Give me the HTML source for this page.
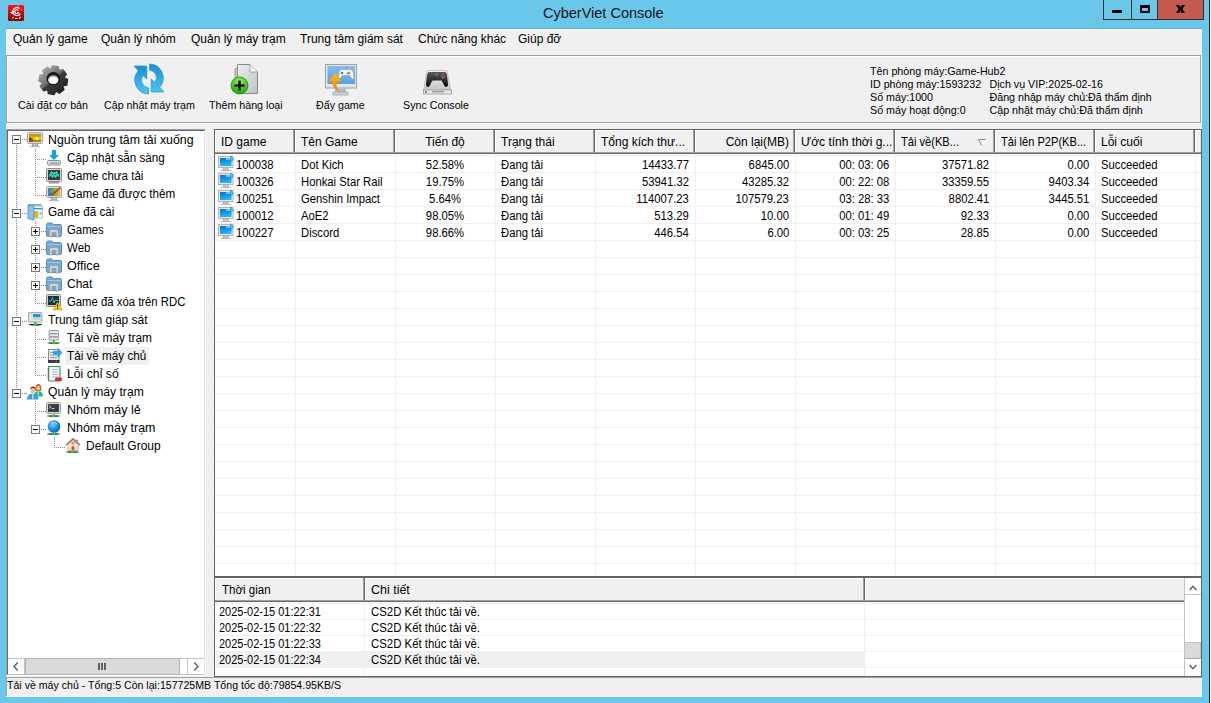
<!DOCTYPE html>
<html><head><meta charset="utf-8">
<style>
*{margin:0;padding:0;box-sizing:border-box}
html,body{width:1211px;height:703px;overflow:hidden}
body{position:relative;background:#69c8ea;font-family:"Liberation Sans",sans-serif;color:#000;font-size:12px}
.a{position:absolute}
.t{position:absolute;white-space:nowrap;line-height:1}
svg{position:absolute;overflow:visible}
.dv{position:absolute;width:1px;background:repeating-linear-gradient(to bottom,#888 0 1px,transparent 1px 2px)}
.dh{position:absolute;height:1px;background:repeating-linear-gradient(to right,#888 0 1px,transparent 1px 2px)}
</style></head><body>
<svg style="left:8px;top:5px" width="16" height="16" viewBox="0 0 16 16"><defs><linearGradient id="gapp" x1="0" y1="0" x2="0" y2="1"><stop offset="0" stop-color="#ff1414"/><stop offset="1" stop-color="#8a0000"/></linearGradient></defs><rect x="0" y="0" width="16" height="16" rx="1.5" fill="url(#gapp)"/><path d="M11.6 3.6 A4 4 0 1 0 12.3 8.6" fill="none" stroke="#fff" stroke-width="1.3"/><path d="M10.3 5.6 A1.9 1.9 0 1 0 10.3 7.6 H9" fill="none" stroke="#fff" stroke-width="1.1"/><path d="M9.5 1.5 L10.5 0.8 M12.8 4.8 L14 4.4" stroke="#fff" stroke-width="0.9"/><path d="M2 7.5 L4.8 6 L4.8 9.2Z" fill="#fff"/><path d="M5 13.5 V12 M7 13.5 H9.5 M11 13.5 L12.5 11.8" stroke="#fff" stroke-width="1.2"/></svg>
<div class="t" style="left:543px;top:6.33px;font-size:14.5px;color:#101020">CyberViet Console</div>
<div class="a" style="left:1103px;top:0px;width:29px;height:20px;border-left:1px solid #2b2b2b;border-bottom:1px solid #2b2b2b"></div>
<div class="a" style="left:1131px;top:0px;width:27px;height:20px;border-left:1px solid #2b2b2b;border-bottom:1px solid #2b2b2b"></div>
<div class="a" style="left:1157px;top:0px;width:47px;height:20px;background:#c45a50;border:1px solid #3a2a2a;border-top:none"></div>
<div class="a" style="left:1112px;top:10px;width:10px;height:3px;background:#000"></div>
<div class="a" style="left:1140px;top:5px;width:10px;height:8px;border:2px solid #000;border-top-width:3px"></div>
<svg style="left:1176px;top:5px" width="9" height="8"><path d="M0 0 H3.2 L4.5 2.2 L5.8 0 H9 L6.4 4 L9 8 H5.8 L4.5 5.8 L3.2 8 H0 L2.6 4Z" fill="#000"/></svg>
<div class="a" style="left:1209px;top:0px;width:1px;height:703px;background:#2b2b2b"></div>
<div class="a" style="left:1210px;top:0px;width:1px;height:703px;background:#fff"></div>
<div class="a" style="left:5px;top:28px;width:1197px;height:1px;background:#62aed2"></div>
<div class="a" style="left:6px;top:29px;width:1196px;height:668px;background:#f0f0f0"></div>
<div class="a" style="left:6px;top:29px;width:1196px;height:1px;background:#f8f4f4"></div>
<div class="a" style="left:6px;top:29px;width:1px;height:26px;background:#f8f4f4"></div>
<div class="t" style="left:13px;top:33.14px;font-size:12px;">Quản lý game</div>
<div class="t" style="left:101px;top:33.14px;font-size:12px;">Quản lý nhóm</div>
<div class="t" style="left:191px;top:33.14px;font-size:12px;">Quản lý máy trạm</div>
<div class="t" style="left:300px;top:33.14px;font-size:12px;">Trung tâm giám sát</div>
<div class="t" style="left:418px;top:33.14px;font-size:12px;">Chức năng khác</div>
<div class="t" style="left:518px;top:33.14px;font-size:12px;">Giúp đỡ</div>
<div class="a" style="left:7px;top:56px;width:1195px;height:68px;border:1px solid #fff"></div>
<div class="a" style="left:6px;top:55px;width:1195px;height:68px;border:1px solid #a0a0a0"></div>
<svg style="left:38px;top:65px" width="32" height="31" viewBox="0 0 32 31"><defs><linearGradient id="ggear" x1="0.15" y1="0.15" x2="0.75" y2="0.85"><stop offset="0" stop-color="#a4a4a4"/><stop offset="0.48" stop-color="#6c6c6c"/><stop offset="0.56" stop-color="#3a3a3a"/><stop offset="1" stop-color="#282828"/></linearGradient></defs><path d="M12.97 4.25 L14.59 1.02 L20.17 1.86 L20.77 5.43 L21.39 5.80 L24.83 4.67 L28.18 9.21 L26.08 12.15 L26.25 12.87 L29.48 14.49 L28.64 20.07 L25.07 20.67 L24.70 21.29 L25.83 24.73 L21.29 28.08 L18.35 25.98 L17.63 26.15 L16.01 29.38 L10.43 28.54 L9.83 24.97 L9.21 24.60 L5.77 25.73 L2.42 21.19 L4.52 18.25 L4.35 17.53 L1.12 15.91 L1.96 10.33 L5.53 9.73 L5.90 9.11 L4.77 5.67 L9.31 2.32 L12.25 4.42Z" fill="url(#ggear)" stroke="url(#ggear)" stroke-width="1.6" stroke-linejoin="round"/><ellipse cx="15.3" cy="13.7" rx="6.8" ry="6.6" fill="#151515"/><ellipse cx="15.3" cy="14.6" rx="5.2" ry="4.4" fill="#b0b0b0"/><ellipse cx="15.3" cy="15.399999999999999" rx="4.8" ry="3.6" fill="#fcfcfc"/></svg>
<svg style="left:133px;top:64px" width="32" height="31" viewBox="0 0 32 31"><defs><linearGradient id="gref" x1="0" y1="0" x2="0" y2="1"><stop offset="0" stop-color="#1890d0"/><stop offset="1" stop-color="#4ac6f4"/></linearGradient></defs><path d="M15.5 30 A14 14 0 0 1 5.2 6.8 L1 2 H13.8 V15 L10.2 11.6 A7.6 7.6 0 0 0 15.5 23.8Z" fill="url(#gref)" stroke="#1a8ccc" stroke-width="0.6"/><path d="M16.5 0 A14 14 0 0 1 26.8 23.2 L31 28 H18.2 V15 L21.8 18.4 A7.6 7.6 0 0 0 16.5 6.2Z" fill="url(#gref)" stroke="#1a8ccc" stroke-width="0.6"/></svg>
<svg style="left:232px;top:64px" width="32" height="31" viewBox="0 0 32 31"><defs><linearGradient id="gdoc" x1="0" y1="0" x2="1" y2="1"><stop offset="0" stop-color="#e8eeee"/><stop offset="1" stop-color="#bcc6c6"/></linearGradient><radialGradient id="ggrn" cx="0.5" cy="0.3" r="0.7"><stop offset="0" stop-color="#a0f060"/><stop offset="1" stop-color="#20a010"/></radialGradient></defs><path d="M3 5 L6 3 L6 26 L3 26Z" fill="#c8c8c8" stroke="#8a8a8a" stroke-width="0.8"/><path d="M5.5 0.5 H18 L25.5 8 V29.5 H5.5Z" fill="url(#gdoc)" stroke="#8a8a8a" stroke-width="1"/><path d="M18 0.5 V8 H25.5" fill="#f4f4f4" stroke="#9a9a9a" stroke-width="0.8"/><circle cx="7.5" cy="21.5" r="8.5" fill="url(#ggrn)" stroke="#1a8a10" stroke-width="0.8"/><path d="M7.5 16.5 V26.5 M2.5 21.5 H12.5" stroke="#1a1a1a" stroke-width="2.6"/></svg>
<svg style="left:325px;top:64px" width="32" height="31" viewBox="0 0 32 31"><defs><linearGradient id="gscr" x1="0" y1="0" x2="0" y2="1"><stop offset="0" stop-color="#88bcf0"/><stop offset="1" stop-color="#5e9ee4"/></linearGradient><linearGradient id="gorg" x1="0" y1="0" x2="0" y2="1"><stop offset="0" stop-color="#ffc000"/><stop offset="1" stop-color="#ff7800"/></linearGradient></defs><rect x="0.5" y="0.5" width="31" height="23.5" fill="#dfe6e6" stroke="#9aa6a6"/><rect x="2.5" y="2" width="27.5" height="18" fill="url(#gscr)"/><rect x="10" y="24" width="11" height="4" fill="#b4c0c0"/><rect x="8" y="28" width="15" height="3" fill="#c8d0d0" stroke="#909c9c" stroke-width="0.6"/><path d="M14 8.5 Q14 5.5 17 5.5 H25 Q28 5.5 28.5 9 L29 14 Q29 16 27 15 L24.5 11.5 H17.5 L15 14.5 Q13.5 15.5 13.5 13Z" fill="#f4f4f4" stroke="#9a9a9a" stroke-width="0.6"/><circle cx="17" cy="9" r="1.3" fill="#20b020"/><circle cx="24" cy="9" r="1.3" fill="#e07040"/><circle cx="22.5" cy="9.5" r="1" fill="#40a0e0"/><path d="M21 5.5 Q21 3 23 2" fill="none" stroke="#888" stroke-width="0.6"/><path d="M16 28.5 Q10.5 25 11.5 17.5 H17 L10.2 9 L3.5 17.5 H7.5 Q7 25 16 28.5Z" fill="url(#gorg)"/></svg>
<svg style="left:423px;top:70px" width="29" height="24" viewBox="0 0 29 24"><defs><linearGradient id="gbase" x1="0" y1="0" x2="0" y2="1"><stop offset="0" stop-color="#f4f4f4"/><stop offset="1" stop-color="#c4c4c4"/></linearGradient><linearGradient id="gpad" x1="0" y1="0" x2="0" y2="1"><stop offset="0" stop-color="#5a5a5a"/><stop offset="1" stop-color="#0a0a0a"/></linearGradient></defs><path d="M4 0.5 H24 L28 21 H0.5Z" fill="url(#gbase)" stroke="#a8a8a8" stroke-width="0.6"/><rect x="0.5" y="20" width="28" height="4" fill="#e8e8e8" stroke="#808080" stroke-width="0.6"/><rect x="9" y="21" width="12" height="1.4" fill="#9a9a9a"/><rect x="2" y="21" width="2" height="2" fill="#40a0d0"/><path d="M6 2 Q4.5 2 4 5 L3 14 Q3 17 5 17 Q6.5 17 8 13 L9.5 10.5 H18.5 L20 13 Q21.5 17 23 17 Q25 17 25 14 L24 5 Q23.5 2 22 2Z" fill="url(#gpad)"/><circle cx="20" cy="4.5" r="1" fill="#e05020"/><circle cx="21.5" cy="6" r="1" fill="#e02030"/><circle cx="18.5" cy="6" r="1" fill="#2060d0"/><circle cx="20" cy="7.5" r="1" fill="#70c020"/><rect x="11.5" y="3.5" width="4" height="2" rx="1" fill="#707070"/></svg>
<div class="t" style="left:18px;top:99.94px;font-size:10.7px;">Cài đặt cơ bản</div>
<div class="t" style="left:104px;top:99.94px;font-size:10.7px;">Cập nhật máy trạm</div>
<div class="t" style="left:209px;top:99.94px;font-size:10.7px;">Thêm hàng loại</div>
<div class="t" style="left:316px;top:99.94px;font-size:10.7px;">Đẩy game</div>
<div class="t" style="left:403px;top:99.94px;font-size:10.7px;">Sync Console</div>
<div class="t" style="left:870px;top:66.24px;font-size:10.7px;">Tên phòng máy:Game-Hub2</div>
<div class="t" style="left:870px;top:78.84px;font-size:10.7px;">ID phòng máy:1593232</div>
<div class="t" style="left:870px;top:92.24px;font-size:10.7px;">Số máy:1000</div>
<div class="t" style="left:870px;top:105.14px;font-size:10.7px;">Số máy hoạt động:0</div>
<div class="t" style="left:989.5px;top:78.84px;font-size:10.7px;">Dịch vụ VIP:2025-02-16</div>
<div class="t" style="left:989.5px;top:92.24px;font-size:10.7px;">Đăng nhập máy chủ:Đã thẩm định</div>
<div class="t" style="left:989.5px;top:105.14px;font-size:10.7px;">Cập nhật máy chủ:Đã thẩm định</div>
<div class="a" style="left:6px;top:129px;width:200px;height:547px;background:#fff;border-style:solid;border-width:1px;border-color:#a0a0a0 #fff #fff #a0a0a0"></div>
<div class="a" style="left:7px;top:130px;width:198px;height:545px;border-style:solid;border-width:1px;border-color:#696969 #e3e3e3 #e3e3e3 #696969"></div>
<div class="dv" style="left:16px;top:145px;height:244px"></div>
<div class="dv" style="left:35px;top:149px;height:47px"></div>
<div class="dv" style="left:35px;top:221px;height:83px"></div>
<div class="dv" style="left:35px;top:329px;height:47px"></div>
<div class="dv" style="left:35px;top:401px;height:29px"></div>
<div class="dv" style="left:54px;top:437px;height:11px"></div>
<div class="a" style="left:12px;top:135px;width:9px;height:9px;background:#fff;border:1px solid #7a7a7a"></div>
<div class="a" style="left:14px;top:139px;width:5px;height:1px;background:#000"></div>
<div class="dh" style="left:22px;top:139px;width:5px"></div>
<svg style="left:27px;top:132px" width="16" height="16" viewBox="0 0 16 16"><defs><linearGradient id="gsun" x1="0" y1="0" x2="0" y2="1"><stop offset="0" stop-color="#b88a00"/><stop offset="0.6" stop-color="#f2c200"/><stop offset="1" stop-color="#c89000"/></linearGradient></defs><rect x="0.5" y="0.5" width="15" height="11" rx="1" fill="#dcdcdc" stroke="#a4a4a4"/><rect x="2" y="2" width="12" height="8" fill="url(#gsun)"/><path d="M2 5.5 Q4 5 6 7.5 L6 10 L2 10Z" fill="#502050" opacity="0.8"/><circle cx="10" cy="6.5" r="1.8" fill="#fff8a0"/><rect x="2" y="8.3" width="12" height="1" fill="#a07000"/><rect x="5.5" y="11.5" width="5" height="2.5" fill="#c4c4c4" stroke="#a0a0a0" stroke-width="1"/><rect x="3" y="14" width="10" height="1.2" fill="#b8b8b8"/></svg>
<div class="t" style="left:48px;top:133.84px;font-size:12px;transform:scaleX(1.029);transform-origin:left top;">Nguồn trung tâm tải xuống</div>
<div class="dh" style="left:37px;top:159px;width:9px"></div>
<svg style="left:46px;top:150px" width="16" height="16" viewBox="0 0 16 16"><path d="M6 0H10V5H13L8 10L3 5H6Z" fill="#1a9fe0"/><rect x="1.5" y="10.5" width="13" height="4.5" rx="1.5" fill="#e6e6e6" stroke="#8a8a8a"/><rect x="4" y="12.5" width="7" height="1" fill="#707070"/><rect x="11.5" y="12.3" width="1.5" height="1.5" fill="#20d040"/></svg>
<div class="t" style="left:67px;top:151.84px;font-size:12px;transform:scaleX(0.97);transform-origin:left top;">Cập nhật sẵn sàng</div>
<div class="dh" style="left:37px;top:177px;width:9px"></div>
<svg style="left:46px;top:168px" width="16" height="16" viewBox="0 0 16 16"><rect x="0.5" y="0.5" width="15" height="13" rx="1" fill="#d6d6d6" stroke="#8c8c8c"/><rect x="2" y="2" width="12" height="10" fill="#3a3a3a"/><path d="M5 3h1v1h4V3h1v1h1v2h1v3h-1v-1h-1v1h-1v1h-1v-1H7v1H6v-1H5V8H4v1H3V6h1V4h1z" fill="#20d0b0"/><rect x="6" y="6" width="1" height="1" fill="#3a3a3a"/><rect x="9" y="6" width="1" height="1" fill="#3a3a3a"/><rect x="3" y="14" width="10" height="1.5" fill="#9a9a9a"/></svg>
<div class="t" style="left:67px;top:169.84px;font-size:12px;transform:scaleX(0.962);transform-origin:left top;">Game chưa tải</div>
<div class="dh" style="left:37px;top:195px;width:9px"></div>
<svg style="left:46px;top:186px" width="16" height="16" viewBox="0 0 16 16"><defs><linearGradient id="gpic" x1="0" y1="0" x2="1" y2="0"><stop offset="0" stop-color="#3a80d0"/><stop offset="0.5" stop-color="#70b040"/><stop offset="1" stop-color="#f0c020"/></linearGradient></defs><rect x="0.5" y="0.5" width="15" height="11" rx="1" fill="#dcdcdc" stroke="#a4a4a4"/><rect x="2" y="2" width="12" height="8" fill="url(#gpic)"/><path d="M3 9 L7 5 L4 10Z" fill="#2a60b0"/><path d="M5 9 L14 1 L15 2 L6 10Z" fill="#d02020"/><rect x="5.5" y="11.5" width="5" height="2.5" fill="#c4c4c4" stroke="#a0a0a0" stroke-width="1"/><rect x="3" y="14" width="10" height="1.2" fill="#b8b8b8"/></svg>
<div class="t" style="left:67px;top:187.84px;font-size:12px;transform:scaleX(0.973);transform-origin:left top;">Game đã được thêm</div>
<div class="a" style="left:12px;top:209px;width:9px;height:9px;background:#fff;border:1px solid #7a7a7a"></div>
<div class="a" style="left:14px;top:213px;width:5px;height:1px;background:#000"></div>
<div class="dh" style="left:22px;top:213px;width:5px"></div>
<svg style="left:27px;top:204px" width="16" height="16" viewBox="0 0 16 16"><path d="M1.5 0.5 H14 V4 H1.5Z" fill="#88bcd8" stroke="#5a98bc" stroke-width="0.7"/><rect x="6.5" y="2" width="9" height="12" fill="#fbfbfb" stroke="#8fb0b8" stroke-width="0.7"/><rect x="6.5" y="4" width="9" height="1.3" fill="#2a90e0"/><rect x="7.2" y="7" width="4" height="6.5" fill="#e2b010"/><circle cx="13.5" cy="9.5" r="1.3" fill="#60c0f0"/><path d="M1 0.8 L7 2.5 V16 L1 14.5Z" fill="#8cc2e4" stroke="#4a88b4" stroke-width="0.8"/></svg>
<div class="t" style="left:48px;top:205.84px;font-size:12px;transform:scaleX(0.977);transform-origin:left top;">Game đã cài</div>
<div class="a" style="left:31px;top:227px;width:9px;height:9px;background:#fff;border:1px solid #7a7a7a"></div>
<div class="a" style="left:33px;top:231px;width:5px;height:1px;background:#000"></div>
<div class="a" style="left:35px;top:229px;width:1px;height:5px;background:#000"></div>
<div class="dh" style="left:41px;top:231px;width:5px"></div>
<svg style="left:46px;top:222px" width="16" height="16" viewBox="0 0 16 16"><path d="M0.5 2.5 Q0.5 1 2 1 H6 L7.5 2.5 H14 Q15.5 2.5 15.5 4 V13 Q15.5 14.5 14 14.5 H2 Q0.5 14.5 0.5 13Z" fill="#74aad6" stroke="#5a8fbd" stroke-width="1"/><rect x="1" y="4" width="14" height="1" fill="#9cc6ea"/><path d="M3.5 15 V9 Q3.5 7.5 5 7.5 H11 Q12.5 7.5 12.5 9 V15 H10 V10.5 H6 V15Z" fill="#d2d2d2" stroke="#9a9a9a" stroke-width="0.8"/></svg>
<div class="t" style="left:67px;top:223.84px;font-size:12px;transform:scaleX(0.946);transform-origin:left top;">Games</div>
<div class="a" style="left:31px;top:245px;width:9px;height:9px;background:#fff;border:1px solid #7a7a7a"></div>
<div class="a" style="left:33px;top:249px;width:5px;height:1px;background:#000"></div>
<div class="a" style="left:35px;top:247px;width:1px;height:5px;background:#000"></div>
<div class="dh" style="left:41px;top:249px;width:5px"></div>
<svg style="left:46px;top:240px" width="16" height="16" viewBox="0 0 16 16"><path d="M0.5 2.5 Q0.5 1 2 1 H6 L7.5 2.5 H14 Q15.5 2.5 15.5 4 V13 Q15.5 14.5 14 14.5 H2 Q0.5 14.5 0.5 13Z" fill="#74aad6" stroke="#5a8fbd" stroke-width="1"/><rect x="1" y="4" width="14" height="1" fill="#9cc6ea"/><path d="M3.5 15 V9 Q3.5 7.5 5 7.5 H11 Q12.5 7.5 12.5 9 V15 H10 V10.5 H6 V15Z" fill="#d2d2d2" stroke="#9a9a9a" stroke-width="0.8"/></svg>
<div class="t" style="left:67px;top:241.84px;font-size:12px;transform:scaleX(0.958);transform-origin:left top;">Web</div>
<div class="a" style="left:31px;top:263px;width:9px;height:9px;background:#fff;border:1px solid #7a7a7a"></div>
<div class="a" style="left:33px;top:267px;width:5px;height:1px;background:#000"></div>
<div class="a" style="left:35px;top:265px;width:1px;height:5px;background:#000"></div>
<div class="dh" style="left:41px;top:267px;width:5px"></div>
<svg style="left:46px;top:258px" width="16" height="16" viewBox="0 0 16 16"><path d="M0.5 2.5 Q0.5 1 2 1 H6 L7.5 2.5 H14 Q15.5 2.5 15.5 4 V13 Q15.5 14.5 14 14.5 H2 Q0.5 14.5 0.5 13Z" fill="#74aad6" stroke="#5a8fbd" stroke-width="1"/><rect x="1" y="4" width="14" height="1" fill="#9cc6ea"/><path d="M3.5 15 V9 Q3.5 7.5 5 7.5 H11 Q12.5 7.5 12.5 9 V15 H10 V10.5 H6 V15Z" fill="#d2d2d2" stroke="#9a9a9a" stroke-width="0.8"/></svg>
<div class="t" style="left:67px;top:259.84px;font-size:12px;transform:scaleX(1.05);transform-origin:left top;">Office</div>
<div class="a" style="left:31px;top:281px;width:9px;height:9px;background:#fff;border:1px solid #7a7a7a"></div>
<div class="a" style="left:33px;top:285px;width:5px;height:1px;background:#000"></div>
<div class="a" style="left:35px;top:283px;width:1px;height:5px;background:#000"></div>
<div class="dh" style="left:41px;top:285px;width:5px"></div>
<svg style="left:46px;top:276px" width="16" height="16" viewBox="0 0 16 16"><path d="M0.5 2.5 Q0.5 1 2 1 H6 L7.5 2.5 H14 Q15.5 2.5 15.5 4 V13 Q15.5 14.5 14 14.5 H2 Q0.5 14.5 0.5 13Z" fill="#74aad6" stroke="#5a8fbd" stroke-width="1"/><rect x="1" y="4" width="14" height="1" fill="#9cc6ea"/><path d="M3.5 15 V9 Q3.5 7.5 5 7.5 H11 Q12.5 7.5 12.5 9 V15 H10 V10.5 H6 V15Z" fill="#d2d2d2" stroke="#9a9a9a" stroke-width="0.8"/></svg>
<div class="t" style="left:67px;top:277.84px;font-size:12px;transform:scaleX(1.0);transform-origin:left top;">Chat</div>
<div class="dh" style="left:37px;top:303px;width:9px"></div>
<svg style="left:46px;top:294px" width="16" height="16" viewBox="0 0 16 16"><rect x="0.5" y="0.5" width="14" height="12" rx="1" fill="#d0d0d0" stroke="#8a8a8a"/><rect x="2" y="2" width="11" height="9" fill="#2c2c30"/><path d="M2.5 7 H5 L6.5 3.5 L8 9 L9 6.5 H12.5" fill="none" stroke="#20d0c0" stroke-width="1"/><path d="M11.5 8 L16 16 H7Z" fill="#ffd000" stroke="#b09000" stroke-width="0.6"/><rect x="11.1" y="10.5" width="0.9" height="3" fill="#000"/><rect x="11.1" y="14" width="0.9" height="0.9" fill="#000"/></svg>
<div class="t" style="left:67px;top:295.84px;font-size:12px;transform:scaleX(0.944);transform-origin:left top;">Game đã xóa trên RDC</div>
<div class="a" style="left:12px;top:317px;width:9px;height:9px;background:#fff;border:1px solid #7a7a7a"></div>
<div class="a" style="left:14px;top:321px;width:5px;height:1px;background:#000"></div>
<div class="dh" style="left:22px;top:321px;width:5px"></div>
<svg style="left:27px;top:312px" width="16" height="16" viewBox="0 0 16 16"><rect x="1.5" y="0.5" width="13.5" height="9.5" rx="1" fill="#e2e2e2" stroke="#a8a8a8"/><rect x="2.3" y="1.5" width="2.2" height="7.5" fill="#f4f4f4" stroke="#c8c8c8" stroke-width="0.5"/><rect x="6" y="2" width="7.5" height="3.2" fill="#1a98e0"/><rect x="6.5" y="6.5" width="1" height="1" fill="#9a9a9a"/><rect x="8.5" y="6.5" width="1" height="1" fill="#9a9a9a"/><rect x="10.5" y="6.5" width="1" height="1" fill="#9a9a9a"/><rect x="12.5" y="6.5" width="1" height="1" fill="#9a9a9a"/><rect x="7.6" y="10" width="1.6" height="1.6" fill="#707070"/><ellipse cx="8.4" cy="12.6" rx="7" ry="0.8" fill="#202020"/><ellipse cx="8.4" cy="12.6" rx="2" ry="1.3" fill="#10d040"/></svg>
<div class="t" style="left:48px;top:313.84px;font-size:12px;transform:scaleX(1.0);transform-origin:left top;">Trung tâm giáp sát</div>
<div class="dh" style="left:37px;top:339px;width:9px"></div>
<svg style="left:46px;top:330px" width="16" height="16" viewBox="0 0 16 16"><rect x="3" y="0.5" width="9.5" height="3" rx="0.8" fill="#e6e6ee" stroke="#8c8c8c" stroke-width="0.9"/><rect x="3" y="3.8" width="9.5" height="3" rx="0.8" fill="#e0ece6" stroke="#8c8c8c" stroke-width="0.9"/><rect x="3" y="7.1" width="9.5" height="3" rx="0.8" fill="#e6e6ee" stroke="#8c8c8c" stroke-width="0.9"/><rect x="7" y="10.2" width="1.5" height="2" fill="#707070"/><ellipse cx="7.8" cy="13" rx="6.5" ry="0.8" fill="#202020"/><ellipse cx="7.8" cy="13" rx="2" ry="1.3" fill="#10d040"/></svg>
<div class="t" style="left:67px;top:331.84px;font-size:12px;transform:scaleX(0.988);transform-origin:left top;">Tải về máy trạm</div>
<div class="dh" style="left:37px;top:357px;width:9px"></div>
<div class="a" style="left:65px;top:347px;width:84px;height:18px;background:#f0f0f0"></div>
<svg style="left:46px;top:348px" width="16" height="16" viewBox="0 0 16 16"><rect x="2.5" y="1.5" width="10.5" height="13" fill="#e4e4e4" stroke="#8a8a8a"/><rect x="4" y="4" width="5" height="1" fill="#a0a0a0"/><rect x="4" y="6.5" width="7" height="1" fill="#a0a0a0"/><rect x="4" y="9" width="7" height="1" fill="#a0a0a0"/><rect x="2" y="12" width="11.5" height="3" fill="#3c3c3c"/><rect x="9.8" y="12.8" width="1.2" height="1.2" fill="#20d040"/><path d="M7.5 3.3 H12 V0.5 L16 4.8 L12 9 V6.3 H7.5Z" fill="#28aaf0" stroke="#1080c8" stroke-width="0.5"/></svg>
<div class="t" style="left:67px;top:349.84px;font-size:12px;transform:scaleX(0.975);transform-origin:left top;">Tải về máy chủ</div>
<div class="dh" style="left:37px;top:375px;width:9px"></div>
<svg style="left:46px;top:366px" width="16" height="16" viewBox="0 0 16 16"><rect x="2.5" y="0.5" width="11.5" height="14.5" rx="0.8" fill="#fafafa" stroke="#2a9a3a" stroke-width="1.1"/><rect x="6" y="3" width="6.5" height="1" fill="#9ab8e0"/><rect x="6" y="5.5" width="6.5" height="1" fill="#9ab8e0"/><rect x="6" y="8" width="6.5" height="1" fill="#9ab8e0"/><rect x="6" y="10.5" width="6.5" height="1" fill="#9ab8e0"/><path d="M1.5 2.5h2M1.5 4.5h2M1.5 6.5h2M1.5 8.5h2M1.5 10.5h2M1.5 12.5h2" stroke="#707070" stroke-width="0.9"/><rect x="9" y="11.5" width="7" height="3.5" rx="1.2" fill="#e82030"/></svg>
<div class="t" style="left:67px;top:367.84px;font-size:12px;transform:scaleX(1.02);transform-origin:left top;">Lỗi chỉ số</div>
<div class="a" style="left:12px;top:389px;width:9px;height:9px;background:#fff;border:1px solid #7a7a7a"></div>
<div class="a" style="left:14px;top:393px;width:5px;height:1px;background:#000"></div>
<div class="dh" style="left:22px;top:393px;width:5px"></div>
<svg style="left:27px;top:384px" width="16" height="16" viewBox="0 0 16 16"><path d="M8.5 7 Q7.5 0 11.3 0 Q15 0 14.2 7Z" fill="#c8602a"/><ellipse cx="11.2" cy="4.2" rx="1.9" ry="2.4" fill="#f6c8a0"/><path d="M7 12.5 Q7 7.2 11.2 7.2 Q15.8 7.2 16 12.5Z" fill="#22b888"/><rect x="10.8" y="7.5" width="0.8" height="4" fill="#e8f8f0"/><path d="M3.2 5.5 Q3.5 2.6 5.8 2.6 Q8.6 2.6 8.6 5.5Z" fill="#4a3030"/><ellipse cx="5.8" cy="6.6" rx="2.3" ry="2.8" fill="#f6c090"/><path d="M0 15.5 Q0 9.8 5.8 9.8 Q11.5 9.8 11.5 15.5Z" fill="#3a9ee4"/><rect x="5.4" y="10" width="0.9" height="5" fill="#fff"/></svg>
<div class="t" style="left:48px;top:385.84px;font-size:12px;transform:scaleX(1.011);transform-origin:left top;">Quản lý máy trạm</div>
<div class="dh" style="left:37px;top:411px;width:9px"></div>
<svg style="left:46px;top:402px" width="16" height="16" viewBox="0 0 16 16"><rect x="0.5" y="0.5" width="14" height="11" rx="1" fill="#dcdcdc" stroke="#9c9c9c"/><rect x="2" y="2" width="11" height="8" fill="#3c3c44"/><path d="M3 3.5 L5 5 L3 6.5" fill="none" stroke="#e0e0e0" stroke-width="0.8"/><rect x="5.5" y="6" width="3" height="0.8" fill="#e0e0e0"/><rect x="7.3" y="12" width="1.4" height="1.5" fill="#888"/><ellipse cx="7.5" cy="14" rx="6.8" ry="0.8" fill="#1c1c1c"/><ellipse cx="7.5" cy="14" rx="2" ry="1.3" fill="#10d040"/></svg>
<div class="t" style="left:67px;top:403.84px;font-size:12px;transform:scaleX(1.043);transform-origin:left top;">Nhóm máy lẻ</div>
<div class="a" style="left:31px;top:425px;width:9px;height:9px;background:#fff;border:1px solid #7a7a7a"></div>
<div class="a" style="left:33px;top:429px;width:5px;height:1px;background:#000"></div>
<div class="dh" style="left:41px;top:429px;width:5px"></div>
<svg style="left:46px;top:420px" width="16" height="16" viewBox="0 0 16 16"><defs><radialGradient id="gglobe" cx="0.4" cy="0.35" r="0.7"><stop offset="0" stop-color="#7fd0ff"/><stop offset="0.6" stop-color="#1a8ae0"/><stop offset="1" stop-color="#0a58b0"/></radialGradient></defs><circle cx="8" cy="6.5" r="6.3" fill="url(#gglobe)"/><path d="M5 3 Q8 1.5 11 3.5" fill="none" stroke="#bfe8ff" stroke-width="0.9"/><rect x="7.3" y="12.5" width="1.4" height="1" fill="#888"/><ellipse cx="7.5" cy="14" rx="6.8" ry="0.8" fill="#1c1c1c"/><ellipse cx="7.5" cy="14" rx="2" ry="1.3" fill="#10d040"/></svg>
<div class="t" style="left:67px;top:421.84px;font-size:12px;transform:scaleX(1.036);transform-origin:left top;">Nhóm máy trạm</div>
<div class="dh" style="left:56px;top:447px;width:9px"></div>
<svg style="left:65px;top:438px" width="16" height="16" viewBox="0 0 16 16"><path d="M1 7 L8 1 L15 7" fill="none" stroke="#8a6a5a" stroke-width="1.4"/><path d="M3 6.5 L8 2.5 L13 6.5 V12.5 H3Z" fill="#f4e2d0" stroke="#b09080" stroke-width="0.6"/><rect x="6.5" y="8" width="3" height="4.5" rx="1.4" fill="#d86020"/><rect x="11" y="1.5" width="2" height="3" fill="#c09080"/><rect x="7" y="4.5" width="2" height="1.6" fill="#90c8f0" stroke="#a06040" stroke-width="0.4"/><ellipse cx="7.5" cy="14" rx="6.8" ry="0.8" fill="#1c1c1c"/><ellipse cx="7.5" cy="14" rx="2" ry="1.3" fill="#10d040"/></svg>
<div class="t" style="left:86px;top:439.84px;font-size:12px;transform:scaleX(1.0);transform-origin:left top;">Default Group</div>
<div class="a" style="left:8px;top:658px;width:196px;height:17px;background:#fff"></div>
<div class="a" style="left:8px;top:658px;width:196px;height:1px;background:#c4c4c4"></div>
<div class="a" style="left:8px;top:674px;width:196px;height:1px;background:#c4c4c4"></div>
<div class="a" style="left:24px;top:658px;width:1px;height:17px;background:#c4c4c4"></div>
<div class="a" style="left:187px;top:658px;width:1px;height:17px;background:#c4c4c4"></div>
<div class="a" style="left:25px;top:658px;width:155px;height:17px;background:#dadada;border:1px solid #b4b4b4"></div>
<div class="a" style="left:98px;top:663px;width:2px;height:7px;background:#606060"></div>
<div class="a" style="left:101px;top:663px;width:2px;height:7px;background:#606060"></div>
<div class="a" style="left:104px;top:663px;width:2px;height:7px;background:#606060"></div>
<svg style="left:13px;top:662px" width="6" height="9"><path d="M4.8 0.6L1 4.5L4.8 8.4" fill="none" stroke="#606060" stroke-width="1.4"/></svg>
<svg style="left:193px;top:662px" width="6" height="9"><path d="M1.2 0.6L5 4.5L1.2 8.4" fill="none" stroke="#606060" stroke-width="1.4"/></svg>
<svg style="left:0;top:0" width="0" height="0"><defs><linearGradient id="glm" x1="0" y1="0" x2="0.3" y2="1"><stop offset="0" stop-color="#0a70c8"/><stop offset="1" stop-color="#20b8f8"/></linearGradient></defs></svg>
<div class="a" style="left:214px;top:129px;width:988px;height:448px;background:#fff;border:1px solid #646464"></div>
<div class="a" style="left:215px;top:155px;width:986px;height:1px;background:#f0f0f0"></div>
<div class="a" style="left:215px;top:172px;width:986px;height:1px;background:#f0f0f0"></div>
<div class="a" style="left:215px;top:189px;width:986px;height:1px;background:#f0f0f0"></div>
<div class="a" style="left:215px;top:206px;width:986px;height:1px;background:#f0f0f0"></div>
<div class="a" style="left:215px;top:223px;width:986px;height:1px;background:#f0f0f0"></div>
<div class="a" style="left:215px;top:240px;width:986px;height:1px;background:#f0f0f0"></div>
<div class="a" style="left:215px;top:257px;width:986px;height:1px;background:#f0f0f0"></div>
<div class="a" style="left:215px;top:274px;width:986px;height:1px;background:#f0f0f0"></div>
<div class="a" style="left:215px;top:291px;width:986px;height:1px;background:#f0f0f0"></div>
<div class="a" style="left:215px;top:308px;width:986px;height:1px;background:#f0f0f0"></div>
<div class="a" style="left:215px;top:325px;width:986px;height:1px;background:#f0f0f0"></div>
<div class="a" style="left:215px;top:342px;width:986px;height:1px;background:#f0f0f0"></div>
<div class="a" style="left:215px;top:359px;width:986px;height:1px;background:#f0f0f0"></div>
<div class="a" style="left:215px;top:376px;width:986px;height:1px;background:#f0f0f0"></div>
<div class="a" style="left:215px;top:393px;width:986px;height:1px;background:#f0f0f0"></div>
<div class="a" style="left:215px;top:410px;width:986px;height:1px;background:#f0f0f0"></div>
<div class="a" style="left:215px;top:427px;width:986px;height:1px;background:#f0f0f0"></div>
<div class="a" style="left:215px;top:444px;width:986px;height:1px;background:#f0f0f0"></div>
<div class="a" style="left:215px;top:461px;width:986px;height:1px;background:#f0f0f0"></div>
<div class="a" style="left:215px;top:478px;width:986px;height:1px;background:#f0f0f0"></div>
<div class="a" style="left:215px;top:495px;width:986px;height:1px;background:#f0f0f0"></div>
<div class="a" style="left:215px;top:512px;width:986px;height:1px;background:#f0f0f0"></div>
<div class="a" style="left:215px;top:529px;width:986px;height:1px;background:#f0f0f0"></div>
<div class="a" style="left:215px;top:546px;width:986px;height:1px;background:#f0f0f0"></div>
<div class="a" style="left:215px;top:563px;width:986px;height:1px;background:#f0f0f0"></div>
<div class="a" style="left:295px;top:154px;width:1px;height:422px;background:#f0f0f0"></div>
<div class="a" style="left:395px;top:154px;width:1px;height:422px;background:#f0f0f0"></div>
<div class="a" style="left:495px;top:154px;width:1px;height:422px;background:#f0f0f0"></div>
<div class="a" style="left:595px;top:154px;width:1px;height:422px;background:#f0f0f0"></div>
<div class="a" style="left:695px;top:154px;width:1px;height:422px;background:#f0f0f0"></div>
<div class="a" style="left:795px;top:154px;width:1px;height:422px;background:#f0f0f0"></div>
<div class="a" style="left:895px;top:154px;width:1px;height:422px;background:#f0f0f0"></div>
<div class="a" style="left:995px;top:154px;width:1px;height:422px;background:#f0f0f0"></div>
<div class="a" style="left:1095px;top:154px;width:1px;height:422px;background:#f0f0f0"></div>
<div class="a" style="left:1195px;top:154px;width:1px;height:422px;background:#f0f0f0"></div>
<div class="a" style="left:215px;top:130px;width:986px;height:24px;background:#f0f0f0"></div>
<div class="a" style="left:215px;top:130px;width:986px;height:1px;background:#fff"></div>
<div class="a" style="left:215px;top:130px;width:1px;height:22px;background:#fff"></div>
<div class="a" style="left:293px;top:130px;width:1px;height:23px;background:#a0a0a0"></div>
<div class="a" style="left:294px;top:130px;width:1px;height:24px;background:#696969"></div>
<div class="a" style="left:295px;top:130px;width:1px;height:22px;background:#fff"></div>
<div class="a" style="left:393px;top:130px;width:1px;height:23px;background:#a0a0a0"></div>
<div class="a" style="left:394px;top:130px;width:1px;height:24px;background:#696969"></div>
<div class="a" style="left:395px;top:130px;width:1px;height:22px;background:#fff"></div>
<div class="a" style="left:493px;top:130px;width:1px;height:23px;background:#a0a0a0"></div>
<div class="a" style="left:494px;top:130px;width:1px;height:24px;background:#696969"></div>
<div class="a" style="left:495px;top:130px;width:1px;height:22px;background:#fff"></div>
<div class="a" style="left:593px;top:130px;width:1px;height:23px;background:#a0a0a0"></div>
<div class="a" style="left:594px;top:130px;width:1px;height:24px;background:#696969"></div>
<div class="a" style="left:595px;top:130px;width:1px;height:22px;background:#fff"></div>
<div class="a" style="left:693px;top:130px;width:1px;height:23px;background:#a0a0a0"></div>
<div class="a" style="left:694px;top:130px;width:1px;height:24px;background:#696969"></div>
<div class="a" style="left:695px;top:130px;width:1px;height:22px;background:#fff"></div>
<div class="a" style="left:793px;top:130px;width:1px;height:23px;background:#a0a0a0"></div>
<div class="a" style="left:794px;top:130px;width:1px;height:24px;background:#696969"></div>
<div class="a" style="left:795px;top:130px;width:1px;height:22px;background:#fff"></div>
<div class="a" style="left:893px;top:130px;width:1px;height:23px;background:#a0a0a0"></div>
<div class="a" style="left:894px;top:130px;width:1px;height:24px;background:#696969"></div>
<div class="a" style="left:895px;top:130px;width:1px;height:22px;background:#fff"></div>
<div class="a" style="left:993px;top:130px;width:1px;height:23px;background:#a0a0a0"></div>
<div class="a" style="left:994px;top:130px;width:1px;height:24px;background:#696969"></div>
<div class="a" style="left:995px;top:130px;width:1px;height:22px;background:#fff"></div>
<div class="a" style="left:1093px;top:130px;width:1px;height:23px;background:#a0a0a0"></div>
<div class="a" style="left:1094px;top:130px;width:1px;height:24px;background:#696969"></div>
<div class="a" style="left:1095px;top:130px;width:1px;height:22px;background:#fff"></div>
<div class="a" style="left:1193px;top:130px;width:1px;height:23px;background:#a0a0a0"></div>
<div class="a" style="left:1194px;top:130px;width:1px;height:24px;background:#696969"></div>
<div class="a" style="left:1195px;top:130px;width:1px;height:22px;background:#fff"></div>
<div class="a" style="left:1200px;top:131px;width:1px;height:21px;background:#e3e3e3"></div>
<div class="a" style="left:215px;top:152px;width:986px;height:1px;background:#a0a0a0"></div>
<div class="a" style="left:215px;top:153px;width:986px;height:1px;background:#696969"></div>
<div class="t" style="left:221px;top:135.84px;font-size:12px;">ID game</div>
<div class="t" style="left:301px;top:135.84px;font-size:12px;">Tên Game</div>
<div class="t" style="left:245px;width:400px;text-align:center;top:135.84px;font-size:12px;">Tiến độ</div>
<div class="t" style="left:501px;top:135.84px;font-size:12px;">Trạng thái</div>
<div class="t" style="left:601px;top:135.84px;font-size:12px;">Tổng kích thư...</div>
<div class="t" style="right:422px;top:135.84px;font-size:12px;">Còn lại(MB)</div>
<div class="t" style="left:801px;top:135.84px;font-size:12px;">Ước tính thời g...</div>
<div class="t" style="left:901px;top:135.84px;font-size:12px;transform:scaleX(0.925);transform-origin:left top;">Tải về(KB...</div>
<div class="t" style="left:1001px;top:135.84px;font-size:12px;transform:scaleX(0.925);transform-origin:left top;">Tải lên P2P(KB...</div>
<div class="t" style="left:1101px;top:135.84px;font-size:12px;">Lỗi cuối</div>
<svg style="left:977px;top:139px" width="10" height="8"><path d="M9 0.5H1.3L4.8 6.5" fill="none" stroke="#8a8a8a" stroke-width="1"/><path d="M9 0.5L5.2 6.5" fill="none" stroke="#fff" stroke-width="1"/></svg>
<svg style="left:218px;top:156px" width="16" height="16" viewBox="0 0 16 16"><rect x="0.5" y="0.5" width="14.5" height="11" fill="#e8e8e8" stroke="#b4b4b4"/><rect x="2" y="2" width="11.5" height="8" fill="url(#glm)"/><path d="M8 3 H13.5" stroke="#b8ecff" stroke-width="1.1"/><path d="M12.5 0 L15.8 3 L12.5 6Z" fill="#48c0f8" stroke="#1a90d8" stroke-width="0.6"/><rect x="5" y="12" width="5.5" height="2" fill="#d0d0d0" stroke="#a8a8a8" stroke-width="0.6"/><rect x="3" y="14" width="10" height="1" fill="#b8b8b8"/></svg>
<div class="t" style="left:236px;top:158.84px;font-size:12px;transform:scaleX(0.94);transform-origin:left top;">100038</div>
<div class="t" style="left:301px;top:158.84px;font-size:12px;transform:scaleX(0.94);transform-origin:left top;">Dot Kich</div>
<div class="t" style="left:245px;width:400px;text-align:center;top:158.84px;font-size:12px;transform:scaleX(0.94);transform-origin:center top;">52.58%</div>
<div class="t" style="left:501px;top:158.84px;font-size:12px;transform:scaleX(0.94);transform-origin:left top;">Đang tải</div>
<div class="t" style="right:522px;top:158.84px;font-size:12px;transform:scaleX(0.94);transform-origin:right top;">14433.77</div>
<div class="t" style="right:422px;top:158.84px;font-size:12px;transform:scaleX(0.94);transform-origin:right top;">6845.00</div>
<div class="t" style="right:322px;top:158.84px;font-size:12px;transform:scaleX(0.94);transform-origin:right top;">00: 03: 06</div>
<div class="t" style="right:222px;top:158.84px;font-size:12px;transform:scaleX(0.94);transform-origin:right top;">37571.82</div>
<div class="t" style="right:122px;top:158.84px;font-size:12px;transform:scaleX(0.94);transform-origin:right top;">0.00</div>
<div class="t" style="left:1101px;top:158.84px;font-size:12px;transform:scaleX(0.94);transform-origin:left top;">Succeeded</div>
<svg style="left:218px;top:173px" width="16" height="16" viewBox="0 0 16 16"><rect x="0.5" y="0.5" width="14.5" height="11" fill="#e8e8e8" stroke="#b4b4b4"/><rect x="2" y="2" width="11.5" height="8" fill="url(#glm)"/><path d="M8 3 H13.5" stroke="#b8ecff" stroke-width="1.1"/><path d="M12.5 0 L15.8 3 L12.5 6Z" fill="#48c0f8" stroke="#1a90d8" stroke-width="0.6"/><rect x="5" y="12" width="5.5" height="2" fill="#d0d0d0" stroke="#a8a8a8" stroke-width="0.6"/><rect x="3" y="14" width="10" height="1" fill="#b8b8b8"/></svg>
<div class="t" style="left:236px;top:175.84px;font-size:12px;transform:scaleX(0.94);transform-origin:left top;">100326</div>
<div class="t" style="left:301px;top:175.84px;font-size:12px;transform:scaleX(0.94);transform-origin:left top;">Honkai Star Rail</div>
<div class="t" style="left:245px;width:400px;text-align:center;top:175.84px;font-size:12px;transform:scaleX(0.94);transform-origin:center top;">19.75%</div>
<div class="t" style="left:501px;top:175.84px;font-size:12px;transform:scaleX(0.94);transform-origin:left top;">Đang tải</div>
<div class="t" style="right:522px;top:175.84px;font-size:12px;transform:scaleX(0.94);transform-origin:right top;">53941.32</div>
<div class="t" style="right:422px;top:175.84px;font-size:12px;transform:scaleX(0.94);transform-origin:right top;">43285.32</div>
<div class="t" style="right:322px;top:175.84px;font-size:12px;transform:scaleX(0.94);transform-origin:right top;">00: 22: 08</div>
<div class="t" style="right:222px;top:175.84px;font-size:12px;transform:scaleX(0.94);transform-origin:right top;">33359.55</div>
<div class="t" style="right:122px;top:175.84px;font-size:12px;transform:scaleX(0.94);transform-origin:right top;">9403.34</div>
<div class="t" style="left:1101px;top:175.84px;font-size:12px;transform:scaleX(0.94);transform-origin:left top;">Succeeded</div>
<svg style="left:218px;top:190px" width="16" height="16" viewBox="0 0 16 16"><rect x="0.5" y="0.5" width="14.5" height="11" fill="#e8e8e8" stroke="#b4b4b4"/><rect x="2" y="2" width="11.5" height="8" fill="url(#glm)"/><path d="M8 3 H13.5" stroke="#b8ecff" stroke-width="1.1"/><path d="M12.5 0 L15.8 3 L12.5 6Z" fill="#48c0f8" stroke="#1a90d8" stroke-width="0.6"/><rect x="5" y="12" width="5.5" height="2" fill="#d0d0d0" stroke="#a8a8a8" stroke-width="0.6"/><rect x="3" y="14" width="10" height="1" fill="#b8b8b8"/></svg>
<div class="t" style="left:236px;top:192.84px;font-size:12px;transform:scaleX(0.94);transform-origin:left top;">100251</div>
<div class="t" style="left:301px;top:192.84px;font-size:12px;transform:scaleX(0.94);transform-origin:left top;">Genshin Impact</div>
<div class="t" style="left:245px;width:400px;text-align:center;top:192.84px;font-size:12px;transform:scaleX(0.94);transform-origin:center top;">5.64%</div>
<div class="t" style="left:501px;top:192.84px;font-size:12px;transform:scaleX(0.94);transform-origin:left top;">Đang tải</div>
<div class="t" style="right:522px;top:192.84px;font-size:12px;transform:scaleX(0.94);transform-origin:right top;">114007.23</div>
<div class="t" style="right:422px;top:192.84px;font-size:12px;transform:scaleX(0.94);transform-origin:right top;">107579.23</div>
<div class="t" style="right:322px;top:192.84px;font-size:12px;transform:scaleX(0.94);transform-origin:right top;">03: 28: 33</div>
<div class="t" style="right:222px;top:192.84px;font-size:12px;transform:scaleX(0.94);transform-origin:right top;">8802.41</div>
<div class="t" style="right:122px;top:192.84px;font-size:12px;transform:scaleX(0.94);transform-origin:right top;">3445.51</div>
<div class="t" style="left:1101px;top:192.84px;font-size:12px;transform:scaleX(0.94);transform-origin:left top;">Succeeded</div>
<svg style="left:218px;top:207px" width="16" height="16" viewBox="0 0 16 16"><rect x="0.5" y="0.5" width="14.5" height="11" fill="#e8e8e8" stroke="#b4b4b4"/><rect x="2" y="2" width="11.5" height="8" fill="url(#glm)"/><path d="M8 3 H13.5" stroke="#b8ecff" stroke-width="1.1"/><path d="M12.5 0 L15.8 3 L12.5 6Z" fill="#48c0f8" stroke="#1a90d8" stroke-width="0.6"/><rect x="5" y="12" width="5.5" height="2" fill="#d0d0d0" stroke="#a8a8a8" stroke-width="0.6"/><rect x="3" y="14" width="10" height="1" fill="#b8b8b8"/></svg>
<div class="t" style="left:236px;top:209.84px;font-size:12px;transform:scaleX(0.94);transform-origin:left top;">100012</div>
<div class="t" style="left:301px;top:209.84px;font-size:12px;transform:scaleX(0.94);transform-origin:left top;">AoE2</div>
<div class="t" style="left:245px;width:400px;text-align:center;top:209.84px;font-size:12px;transform:scaleX(0.94);transform-origin:center top;">98.05%</div>
<div class="t" style="left:501px;top:209.84px;font-size:12px;transform:scaleX(0.94);transform-origin:left top;">Đang tải</div>
<div class="t" style="right:522px;top:209.84px;font-size:12px;transform:scaleX(0.94);transform-origin:right top;">513.29</div>
<div class="t" style="right:422px;top:209.84px;font-size:12px;transform:scaleX(0.94);transform-origin:right top;">10.00</div>
<div class="t" style="right:322px;top:209.84px;font-size:12px;transform:scaleX(0.94);transform-origin:right top;">00: 01: 49</div>
<div class="t" style="right:222px;top:209.84px;font-size:12px;transform:scaleX(0.94);transform-origin:right top;">92.33</div>
<div class="t" style="right:122px;top:209.84px;font-size:12px;transform:scaleX(0.94);transform-origin:right top;">0.00</div>
<div class="t" style="left:1101px;top:209.84px;font-size:12px;transform:scaleX(0.94);transform-origin:left top;">Succeeded</div>
<svg style="left:218px;top:224px" width="16" height="16" viewBox="0 0 16 16"><rect x="0.5" y="0.5" width="14.5" height="11" fill="#e8e8e8" stroke="#b4b4b4"/><rect x="2" y="2" width="11.5" height="8" fill="url(#glm)"/><path d="M8 3 H13.5" stroke="#b8ecff" stroke-width="1.1"/><path d="M12.5 0 L15.8 3 L12.5 6Z" fill="#48c0f8" stroke="#1a90d8" stroke-width="0.6"/><rect x="5" y="12" width="5.5" height="2" fill="#d0d0d0" stroke="#a8a8a8" stroke-width="0.6"/><rect x="3" y="14" width="10" height="1" fill="#b8b8b8"/></svg>
<div class="t" style="left:236px;top:226.84px;font-size:12px;transform:scaleX(0.94);transform-origin:left top;">100227</div>
<div class="t" style="left:301px;top:226.84px;font-size:12px;transform:scaleX(0.94);transform-origin:left top;">Discord</div>
<div class="t" style="left:245px;width:400px;text-align:center;top:226.84px;font-size:12px;transform:scaleX(0.94);transform-origin:center top;">98.66%</div>
<div class="t" style="left:501px;top:226.84px;font-size:12px;transform:scaleX(0.94);transform-origin:left top;">Đang tải</div>
<div class="t" style="right:522px;top:226.84px;font-size:12px;transform:scaleX(0.94);transform-origin:right top;">446.54</div>
<div class="t" style="right:422px;top:226.84px;font-size:12px;transform:scaleX(0.94);transform-origin:right top;">6.00</div>
<div class="t" style="right:322px;top:226.84px;font-size:12px;transform:scaleX(0.94);transform-origin:right top;">00: 03: 25</div>
<div class="t" style="right:222px;top:226.84px;font-size:12px;transform:scaleX(0.94);transform-origin:right top;">28.85</div>
<div class="t" style="right:122px;top:226.84px;font-size:12px;transform:scaleX(0.94);transform-origin:right top;">0.00</div>
<div class="t" style="left:1101px;top:226.84px;font-size:12px;transform:scaleX(0.94);transform-origin:left top;">Succeeded</div>
<div class="a" style="left:214px;top:576px;width:988px;height:101px;background:#fff;border:1px solid #646464"></div>
<div class="a" style="left:215px;top:577px;width:986px;height:1px;background:#646464"></div>
<div class="a" style="left:215px;top:603px;width:969px;height:1px;background:#f0f0f0"></div>
<div class="a" style="left:215px;top:619px;width:969px;height:1px;background:#f0f0f0"></div>
<div class="a" style="left:215px;top:635px;width:969px;height:1px;background:#f0f0f0"></div>
<div class="a" style="left:215px;top:651px;width:969px;height:1px;background:#f0f0f0"></div>
<div class="a" style="left:215px;top:667px;width:969px;height:1px;background:#f0f0f0"></div>
<div class="a" style="left:364px;top:602px;width:1px;height:74px;background:#f0f0f0"></div>
<div class="a" style="left:864px;top:602px;width:1px;height:74px;background:#f0f0f0"></div>
<div class="a" style="left:216px;top:652px;width:648px;height:15px;background:#f0f0f0"></div>
<div class="a" style="left:215px;top:578px;width:969px;height:24px;background:#f0f0f0"></div>
<div class="a" style="left:215px;top:578px;width:969px;height:1px;background:#fff"></div>
<div class="a" style="left:215px;top:578px;width:1px;height:22px;background:#fff"></div>
<div class="a" style="left:363px;top:578px;width:1px;height:23px;background:#a0a0a0"></div>
<div class="a" style="left:364px;top:578px;width:1px;height:24px;background:#696969"></div>
<div class="a" style="left:365px;top:578px;width:1px;height:22px;background:#fff"></div>
<div class="a" style="left:863px;top:578px;width:1px;height:23px;background:#a0a0a0"></div>
<div class="a" style="left:864px;top:578px;width:1px;height:24px;background:#696969"></div>
<div class="a" style="left:865px;top:578px;width:1px;height:22px;background:#fff"></div>
<div class="a" style="left:215px;top:600px;width:969px;height:1px;background:#a0a0a0"></div>
<div class="a" style="left:215px;top:601px;width:969px;height:1px;background:#696969"></div>
<div class="t" style="left:222px;top:583.84px;font-size:12px;transform:scaleX(0.96);transform-origin:left top;">Thời gian</div>
<div class="t" style="left:371px;top:583.84px;font-size:12px;transform:scaleX(1.04);transform-origin:left top;">Chi tiết</div>
<div class="t" style="left:219px;top:605.84px;font-size:12px;transform:scaleX(0.915);transform-origin:left top;">2025-02-15 01:22:31</div>
<div class="t" style="left:371px;top:605.84px;font-size:12px;transform:scaleX(0.95);transform-origin:left top;">CS2D Kết thúc tải về.</div>
<div class="t" style="left:219px;top:621.84px;font-size:12px;transform:scaleX(0.915);transform-origin:left top;">2025-02-15 01:22:32</div>
<div class="t" style="left:371px;top:621.84px;font-size:12px;transform:scaleX(0.95);transform-origin:left top;">CS2D Kết thúc tải về.</div>
<div class="t" style="left:219px;top:637.84px;font-size:12px;transform:scaleX(0.915);transform-origin:left top;">2025-02-15 01:22:33</div>
<div class="t" style="left:371px;top:637.84px;font-size:12px;transform:scaleX(0.95);transform-origin:left top;">CS2D Kết thúc tải về.</div>
<div class="t" style="left:219px;top:653.84px;font-size:12px;transform:scaleX(0.915);transform-origin:left top;">2025-02-15 01:22:34</div>
<div class="t" style="left:371px;top:653.84px;font-size:12px;transform:scaleX(0.95);transform-origin:left top;">CS2D Kết thúc tải về.</div>
<div class="a" style="left:1184px;top:578px;width:17px;height:98px;background:#fff"></div>
<div class="a" style="left:1184px;top:578px;width:1px;height:98px;background:#c4c4c4"></div>
<div class="a" style="left:1185px;top:594px;width:16px;height:1px;background:#c4c4c4"></div>
<div class="a" style="left:1184px;top:642px;width:17px;height:17px;background:#dadada;border:1px solid #c4c4c4;border-bottom-color:#a8a8a8"></div>
<svg style="left:1189px;top:585px" width="8" height="6"><path d="M0.6 5L4 1.2L7.4 5" fill="none" stroke="#606060" stroke-width="1.4"/></svg>
<svg style="left:1189px;top:664px" width="8" height="6"><path d="M0.6 1L4 4.8L7.4 1" fill="none" stroke="#606060" stroke-width="1.4"/></svg>
<div class="a" style="left:6px;top:677px;width:1196px;height:1px;background:#a0a0a0"></div>
<div class="a" style="left:6px;top:677px;width:1px;height:19px;background:#a0a0a0"></div>
<div class="a" style="left:6px;top:696px;width:1196px;height:1px;background:#fff"></div>
<div class="t" style="left:7px;top:680.03px;font-size:10.6px;">Tải về máy chủ - Tổng:5 Còn lại:157725MB Tổng tốc độ:79854.95KB/S</div>
</body></html>
